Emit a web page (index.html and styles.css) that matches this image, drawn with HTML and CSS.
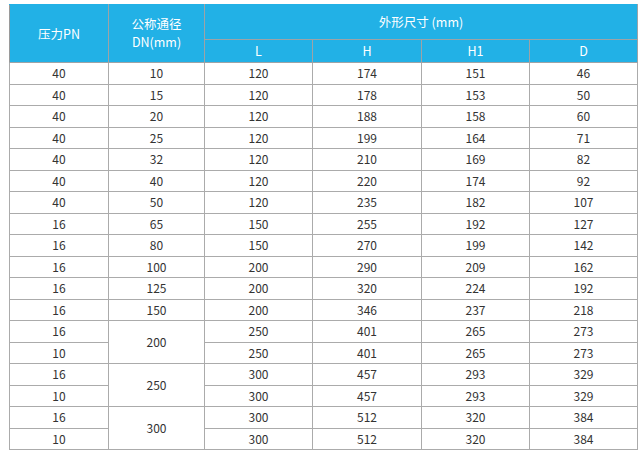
FILE: index.html
```html
<!DOCTYPE html>
<html lang="zh">
<head>
<meta charset="utf-8">
<link rel="stylesheet" href="styles.css">
</head>
<body>
<table class="spec">
<colgroup>
<col class="c1"><col class="c2"><col class="c3"><col class="c4"><col class="c5"><col class="c6">
</colgroup>
<thead>
<tr class="h1r"><th rowspan="2">压力PN</th><th rowspan="2" class="dn"><span class="ln">公称通径</span><span class="ln">DN(mm)</span></th><th colspan="4">外形尺寸 (mm)</th></tr>
<tr class="h2r"><th>L</th><th>H</th><th>H1</th><th>D</th></tr>
</thead>
<tbody>
<tr><td>40</td><td>10</td><td>120</td><td>174</td><td>151</td><td>46</td></tr>
<tr><td>40</td><td>15</td><td>120</td><td>178</td><td>153</td><td>50</td></tr>
<tr><td>40</td><td>20</td><td>120</td><td>188</td><td>158</td><td>60</td></tr>
<tr><td>40</td><td>25</td><td>120</td><td>199</td><td>164</td><td>71</td></tr>
<tr><td>40</td><td>32</td><td>120</td><td>210</td><td>169</td><td>82</td></tr>
<tr><td>40</td><td>40</td><td>120</td><td>220</td><td>174</td><td>92</td></tr>
<tr><td>40</td><td>50</td><td>120</td><td>235</td><td>182</td><td>107</td></tr>
<tr><td>16</td><td>65</td><td>150</td><td>255</td><td>192</td><td>127</td></tr>
<tr><td>16</td><td>80</td><td>150</td><td>270</td><td>199</td><td>142</td></tr>
<tr><td>16</td><td>100</td><td>200</td><td>290</td><td>209</td><td>162</td></tr>
<tr><td>16</td><td>125</td><td>200</td><td>320</td><td>224</td><td>192</td></tr>
<tr><td>16</td><td>150</td><td>200</td><td>346</td><td>237</td><td>218</td></tr>
<tr><td>16</td><td rowspan="2">200</td><td>250</td><td>401</td><td>265</td><td>273</td></tr>
<tr><td>10</td><td>250</td><td>401</td><td>265</td><td>273</td></tr>
<tr><td>16</td><td rowspan="2">250</td><td>300</td><td>457</td><td>293</td><td>329</td></tr>
<tr><td>10</td><td>300</td><td>457</td><td>293</td><td>329</td></tr>
<tr><td>16</td><td rowspan="2">300</td><td>300</td><td>512</td><td>320</td><td>384</td></tr>
<tr><td>10</td><td>300</td><td>512</td><td>320</td><td>384</td></tr>
</tbody>
</table>
</body>
</html>
```
FILE: styles.css
```css
html, body {
  margin: 0;
  background: #ffffff;
}
body {
  padding: 4px 0 0 9px;
  font-family: "Noto Sans CJK SC", "Noto Sans", sans-serif;
}
.spec {
  border-collapse: collapse;
  table-layout: fixed;
  width: 628px;
  font-size: 12px;
  color: #333333;
}
.c1 { width: 99px; }
.c2 { width: 96px; }
.c3 { width: 108px; }
.c4 { width: 109px; }
.c5 { width: 108px; }
.c6 { width: 108px; }
.spec th {
  background: #22b1e6;
  color: #ffffff;
  font-weight: normal;
  font-size: 12.5px;
  border: 1px solid #9ea3a6;
  padding: 0;
  text-align: center;
  line-height: 16px;
}
.spec thead tr:first-child th { border-top-color: #22b1e6; }
.spec thead th:first-child { border-left-color: #9a9a9a; }
.h1r { height: 35px; }
.h2r { height: 23px; }
.spec th.dn { padding-bottom: 2px; }
.ln {
  display: block;
  line-height: 18px;
}
.spec td {
  border: 1px solid #ababab;
  padding: 0;
  text-align: center;
  height: 20.5px;
  line-height: 14px;
}
```
